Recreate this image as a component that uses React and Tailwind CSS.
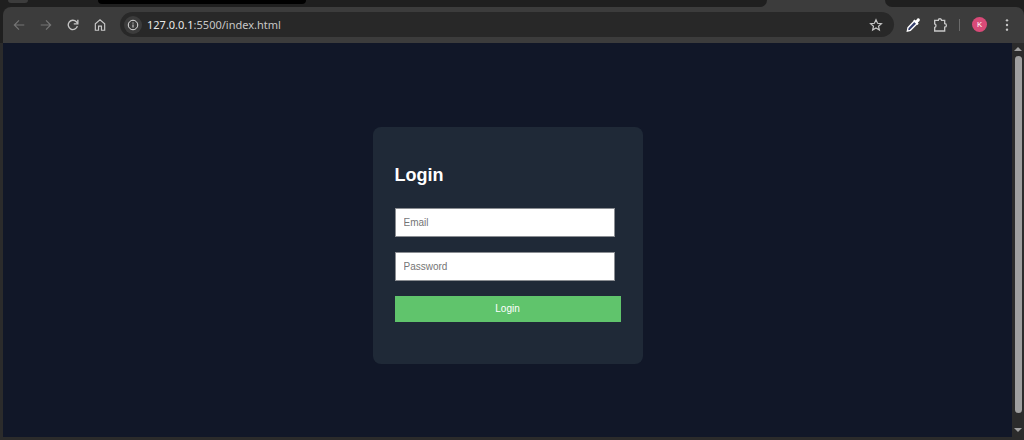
import React, { useState } from 'react';

function ToolbarButton({ label, children, className = '' }) {
  return (
    <button
      type="button"
      aria-label={label}
      className={`flex size-[27px] shrink-0 items-center justify-center rounded-full ${className}`}
    >
      {children}
    </button>
  );
}

function Icon({ children, className = 'size-4' }) {
  return (
    <svg viewBox="0 0 24 24" fill="none" stroke="currentColor" strokeWidth="2" className={className}>
      {children}
    </svg>
  );
}

function TabStrip() {
  return (
    <div className="flex h-[7px] bg-[#3c3c3c]">
      <div className="flex flex-[767] justify-start overflow-hidden rounded-br-lg bg-[#1f1f1f]">
        <div className="ml-2 h-[3px] w-5 rounded-b-lg bg-[#3c3c3c]" />
        <div className="ml-[70px] h-1 w-[208px] rounded-b-sm bg-black" />
      </div>
      <div className="flex-[118]" />
      <div className="flex-[139] rounded-bl-lg bg-[#1f1f1f]" />
    </div>
  );
}

function AddressBar() {
  const [url, setUrl] = useState('');

  return (
    <div className="mr-1 ml-[7px] flex h-[25px] min-w-0 flex-1 items-center rounded-full bg-[#282828] pr-[5px] pl-1">
      <button
        type="button"
        aria-label="Site information"
        className="flex size-[18px] shrink-0 items-center justify-center rounded-full bg-[#3c3c3c] text-[#dedede]"
      >
        <Icon className="size-3">
          <circle cx="12" cy="12" r="9.5" />
          <path d="M12 11v6M12 7v2.2" />
        </Icon>
      </button>
      <div className="relative ml-[5px] h-5 flex-1 font-['Noto_Sans',sans-serif] text-[11px] leading-5">
        <input
          aria-label="Address"
          value={url}
          onChange={(e) => setUrl(e.target.value)}
          className="peer block h-5 w-full bg-transparent text-[#e3e3e3] outline-none"
        />
        {url === '' && (
          <span className="pointer-events-none absolute inset-0 text-[#c7c7c7]">
            <span className="text-[#e8e8e8]">127.0.0.1</span>:5500/index.html
          </span>
        )}
      </div>
      <ToolbarButton label="Bookmark this tab" className="text-[#c7c7c7]">
        <Icon className="size-[14px]">
          <path d="M12 3l2.7 6.1 6.6.6-5 4.4 1.5 6.5L12 17.2l-5.8 3.4 1.5-6.5-5-4.4 6.6-.6z" />
        </Icon>
      </ToolbarButton>
    </div>
  );
}

function Toolbar() {
  return (
    <div className="bg-[#1f1f1f]">
      <div className="ml-[3px] flex h-9 items-center rounded-t-lg bg-[#3c3c3c] pb-px pl-[2px] text-[#c7c7c7]">
        <ToolbarButton label="Back" className="text-[#757575]">
          <Icon className="size-[14px]">
            <path d="M21 12H4M12 4l-8 8 8 8" />
          </Icon>
        </ToolbarButton>
        <ToolbarButton label="Forward" className="text-[#757575]">
          <Icon className="size-[14px]">
            <path d="M3 12h17M12 4l8 8-8 8" />
          </Icon>
        </ToolbarButton>
        <ToolbarButton label="Reload">
          <Icon className="size-[14px]">
            <path d="M19.5 14a8 8 0 1 1-1.8-7.6L20 9" strokeWidth="2.3" />
            <path d="M20.3 3v7h-7" strokeWidth="2.3" />
          </Icon>
        </ToolbarButton>
        <ToolbarButton label="Home">
          <Icon className="size-[14px]">
            <path d="M4 21V10l8-7 8 7v11h-5.5v-7h-5v7z" />
          </Icon>
        </ToolbarButton>
        <AddressBar />
        <ToolbarButton label="Color picker" className="ml-px">
          <svg viewBox="0 0 24 24" className="size-4">
            <path d="M14 6l4 4L8 20l-4.5 1.2L4.5 16z" fill="#35406e" stroke="#fff" strokeWidth="2" />
            <path
              d="M12.5 5.5l1.8-1.8 1.9 1.4 2.2-2.6c2.3-1.6 5 1 3.4 3.4l-2.6 2.4 1.3 1.8-1.8 1.8z"
              fill="#fff"
            />
          </svg>
        </ToolbarButton>
        <ToolbarButton label="Extensions">
          <Icon>
            <path d="M4 5h5.5a2.4 2.4 0 0 1 4.8 0H19v5a2.6 2.6 0 0 1 0 5.2V21H4v-5.4a2.7 2.7 0 0 0 0-5.2z" />
          </Icon>
        </ToolbarButton>
        <div className="mx-[6px] h-3 w-px bg-[#6b6b6b]" />
        <ToolbarButton label="Profile K">
          <span className="flex size-[15px] items-center justify-center rounded-full bg-[#d94a78] font-['Roboto',sans-serif] text-[8px] leading-none text-white">
            K
          </span>
        </ToolbarButton>
        <ToolbarButton label="Menu" className="mr-1">
          <svg viewBox="0 0 24 24" fill="currentColor" className="size-4">
            <circle cx="12" cy="5" r="1.8" />
            <circle cx="12" cy="12" r="1.8" />
            <circle cx="12" cy="19" r="1.8" />
          </svg>
        </ToolbarButton>
      </div>
    </div>
  );
}

function Scrollbar() {
  return (
    <div className="flex w-3 flex-col items-center bg-[#2b2b2b] pt-1 pb-[5px]">
      <svg viewBox="0 0 8 4" className="h-1 w-2">
        <path d="M0 4l4-4 4 4z" fill="#a0a0a0" />
      </svg>
      <div className="mt-[5px] mb-[15px] w-[7px] flex-1 rounded-full bg-[#9f9f9f]" />
      <svg viewBox="0 0 8 4" className="h-1 w-2">
        <path d="M0 0l4 4 4-4z" fill="#a0a0a0" />
      </svg>
    </div>
  );
}

function LoginForm() {
  const [email, setEmail] = useState('');
  const [password, setPassword] = useState('');

  const inputClass =
    'block h-[29px] w-[220px] max-w-full border border-[#8a8d92] bg-white px-2 text-[10px] text-black placeholder:text-[#757575]';

  return (
    <form
      onSubmit={(e) => e.preventDefault()}
      className="w-full max-w-[270px] rounded-lg bg-[#1f2937] px-[22px] pt-9 pb-[42px] font-['Liberation_Sans',Arial,sans-serif]"
    >
      <h2 className="text-[18px] leading-6 font-bold text-white">Login</h2>
      <div className="mt-[21px] flex flex-col gap-[15px]">
        <input
          type="email"
          aria-label="Email"
          placeholder="Email"
          value={email}
          onChange={(e) => setEmail(e.target.value)}
          className={inputClass}
        />
        <input
          type="password"
          aria-label="Password"
          placeholder="Password"
          value={password}
          onChange={(e) => setPassword(e.target.value)}
          className={inputClass}
        />
        <button type="submit" className="h-[26px] w-full bg-[#60c46c] text-[10px] text-white">
          Login
        </button>
      </div>
    </form>
  );
}

function App() {
  return (
    <div className="flex min-h-screen flex-col bg-[#2b2b2b]">
      <TabStrip />
      <Toolbar />
      <div className="flex flex-1 border-b-3 border-l-3 border-[#2b2b2b]">
        <main className="flex flex-1 items-center justify-center bg-[#111728] px-4 pt-2.5">
          <LoginForm />
        </main>
        <Scrollbar />
      </div>
    </div>
  );
}

export default App;
